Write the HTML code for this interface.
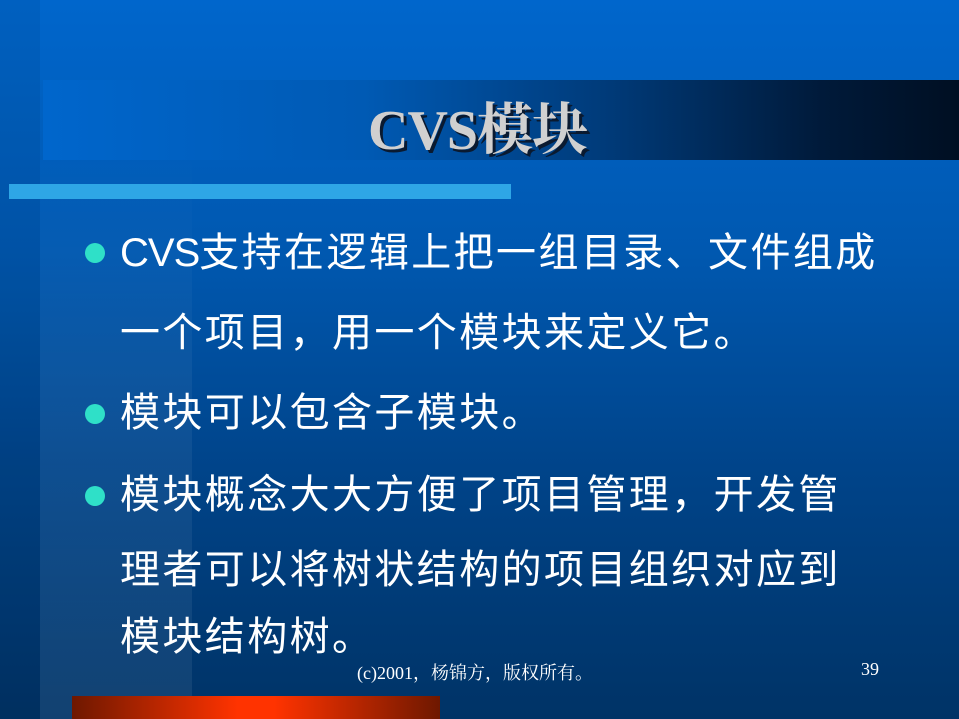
<!DOCTYPE html>
<html><head><meta charset="utf-8"><style>
body{margin:0;width:959px;height:719px;overflow:hidden;position:relative;
background:linear-gradient(180deg,#0066cc 0%,#0058b0 35%,#00448a 65%,#003366 100%);
font-family:"Liberation Sans","Noto Sans CJK SC",sans-serif;}
.band1{position:absolute;left:0;top:0;width:40px;height:719px;background:rgba(0,0,0,0.06)}
.band2{position:absolute;left:40px;top:150px;width:152px;height:569px;background:linear-gradient(180deg,rgba(255,255,255,0) 0%,rgba(255,255,255,0.05) 40%,rgba(255,255,255,0.07) 100%)}
.title{position:absolute;left:43px;top:80px;width:916px;height:80px;background:linear-gradient(90deg,#0066cc 0%,#005ab4 35%,#003a78 62%,#001a3a 85%,#000f22 100%)}
.title span{position:absolute;left:325px;top:6px;font-size:56px;color:#d0d0d0;font-family:"Liberation Serif","Noto Serif CJK SC",serif;font-weight:bold;text-shadow:3px 3px 0 #0a1a30;letter-spacing:-1px}
.stripe{position:absolute;left:9px;top:184px;width:502px;height:15px;background:#2ea6e6}
.t{position:absolute;left:120px;color:#fff;font-size:40px;line-height:44px;white-space:nowrap;letter-spacing:2.4px;font-family:"Liberation Sans","WenQuanYi Zen Hei",sans-serif}
.c{letter-spacing:-1px}
.b{position:absolute;left:85px;width:20px;height:20px;border-radius:50%;background:#2fe0c8}
.foot{position:absolute;top:659px;color:#fff;font-size:18px;font-family:"Liberation Serif","Noto Serif CJK SC",serif}
.bar{position:absolute;left:72px;top:696px;width:368px;height:23px;background:linear-gradient(90deg,#6e1800 0%,#ff3300 45%,#ff3300 55%,#6e1800 100%)}
</style></head><body>
<div class="band1"></div><div class="band2"></div>
<div class="title"><span>CVS模块</span></div>
<div class="stripe"></div>
<div class="b" style="top:243px"></div>
<div class="t" style="top:231px"><span class="c">CVS</span>支持在逻辑上把一组目录、文件组成</div>
<div class="t" style="top:311px">一个项目，用一个模块来定义它。</div>
<div class="b" style="top:404px"></div>
<div class="t" style="top:391px">模块可以包含子模块。</div>
<div class="b" style="top:486px"></div>
<div class="t" style="top:473px">模块概念大大方便了项目管理，开发管</div>
<div class="t" style="top:548px">理者可以将树状结构的项目组织对应到</div>
<div class="t" style="top:615px">模块结构树。</div>
<div class="foot" style="left:357px">(c)2001，杨锦方，版权所有。</div>
<div class="foot" style="left:861px">39</div>
<div class="bar"></div>
</body></html>
